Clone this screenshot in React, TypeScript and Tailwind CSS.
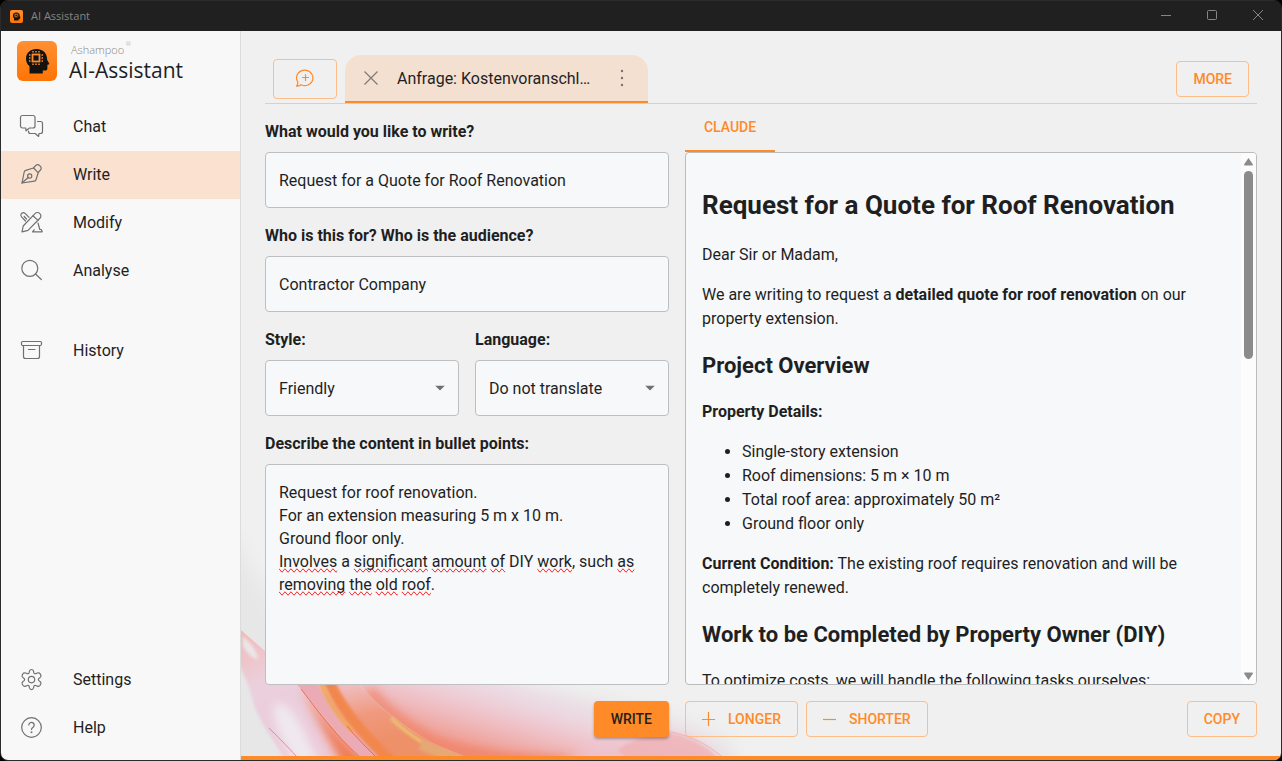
import { useState } from 'react';
import type { ReactNode } from 'react';

interface NavItem {
  id: string;
  label: string;
  icon: ReactNode;
}

interface IconProps {
  children: ReactNode;
}

function NavIcon({ children }: IconProps) {
  return (
    <svg
      viewBox="0 0 28 28"
      className="w-7 h-7 shrink-0"
      fill="none"
      stroke="currentColor"
      strokeWidth="1.2"
      strokeLinecap="round"
      strokeLinejoin="round"
      aria-hidden="true"
    >
      {children}
    </svg>
  );
}

const mainItems: NavItem[] = [
  {
    id: 'chat',
    label: 'Chat',
    icon: (
      <NavIcon>
        <path d="M5.500 2.500h10.500a2 2 0 0 1 2 2v8.500a2 2 0 0 1-2 2h-3.500L9 17.800 8.700 15H5.500a2 2 0 0 1-2-2v-8.500a2 2 0 0 1 2-2z" />
        <path d="M20.500 8.500h3a2 2 0 0 1 2 2v8a2 2 0 0 1-2 2h-1.500l-.4 3-3.400-3h-4.700a2 2 0 0 1-2-2v-.5" />
      </NavIcon>
    ),
  },
  {
    id: 'write',
    label: 'Write',
    icon: (
      <NavIcon>
        <path d="M5 22 7.200 11a2 2 0 0 1 1.500-1.600l7.800-2.400 4.700 4.700-2.200 7a2 2 0 0 1-1.600 1.400z" />
        <path d="m16.500 7 2.300-2.600a2.600 2.600 0 0 1 3.700 0l.9.9a2.600 2.600 0 0 1 0 3.700l-2.200 2.700" />
        <circle cx="12.700" cy="15" r="2.100" />
        <path d="m5 22 6.200-5.500" />
      </NavIcon>
    ),
  },
  {
    id: 'modify',
    label: 'Modify',
    icon: (
      <NavIcon>
        <path d="M5 22.800 6.200 17 18 4.600a3.300 3.300 0 0 1 4.900 0 3.300 3.300 0 0 1 0 4.700L11 21.300z" />
        <path d="m16 6.700 5 4.700" />
        <path d="m8.500 12-4-4.200a2.600 2.600 0 0 1 0-3.400 2.600 2.600 0 0 1 3.600 0L12 8.300" />
        <path d="m7.200 7.500 2.300 2.500" />
        <path d="m21 14 1.800 6.500h1.500l.9 2.300H15.500l1.700-2" />
      </NavIcon>
    ),
  },
  {
    id: 'analyse',
    label: 'Analyse',
    icon: (
      <NavIcon>
        <circle cx="12.800" cy="11.300" r="8" />
        <path d="m18.500 17 5.800 5.500" />
      </NavIcon>
    ),
  },
];

const historyItem: NavItem = {
  id: 'history',
  label: 'History',
  icon: (
    <NavIcon>
      <rect x="4.500" y="4.500" width="20" height="4" rx="1.200" />
      <path d="M6.500 8.500v11a2 2 0 0 0 2 2h12a2 2 0 0 0 2-2v-11M11.500 12.500h6.500" />
    </NavIcon>
  ),
};

const footerItems: NavItem[] = [
  {
    id: 'settings',
    label: 'Settings',
    icon: (
      <NavIcon>
        <path d="M12.500 5.200c.3-1.200.8-1.700 2-1.700s1.700.5 2 1.700l.3 1.500c.2.800 1.200 1.300 2 .9l1.500-.6c1.300-.5 2.200-.2 2.800.8l.7 1.300c.5 1 .2 1.700-.8 2.500l-1.100.9c-.7.600-.7 1.500 0 2.100l1.100.9c1 .8 1.300 1.500.8 2.500l-.7 1.300c-.6 1-1.500 1.300-2.800.8l-1.500-.6c-.8-.4-1.800.1-2 .9l-.3 1.500c-.3 1.200-.8 1.700-2 1.700s-1.700-.5-2-1.700l-.3-1.500c-.2-.8-1.200-1.300-2-.9l-1.500.6c-1.300.5-2.200.2-2.800-.8l-.7-1.300c-.5-1-.2-1.700.8-2.500l1.100-.9c.7-.6.7-1.500 0-2.100L6 11.600c-1-.8-1.300-1.500-.8-2.500l.7-1.300c.6-1 1.500-1.300 2.800-.8l1.500.6c.8.400 1.800-.1 2-.9z" />
        <circle cx="14.500" cy="13.600" r="3.200" />
      </NavIcon>
    ),
  },
  {
    id: 'help',
    label: 'Help',
    icon: (
      <NavIcon>
        <circle cx="14.500" cy="13.500" r="9.800" />
        <path d="M11.800 11a2.700 2.700 0 1 1 4.300 2.200c-1 .7-1.600 1.200-1.600 2.300" />
        <circle cx="14.500" cy="18.300" r=".4" fill="currentColor" />
      </NavIcon>
    ),
  },
];

function AppLogo({ className }: { className: string }) {
  return (
    <svg viewBox="0 0 40 40" className={className} aria-hidden="true">
      <defs>
        <linearGradient id="logo-fill" x1="0" y1="0" x2="0" y2="1">
          <stop offset="0" stopColor="#ff9034" />
          <stop offset="1" stopColor="#ff7404" />
        </linearGradient>
      </defs>
      <rect width="40" height="40" rx="6" fill="url(#logo-fill)" />
      <path
        d="M12.500 32.500v-7.200C10.200 23.500 9 20.700 9 17.500 9 12 13.500 8 19.500 8c6 0 10 3.500 10.500 9l.2 2 1.900 3.200c.4.700.1 1.200-.6 1.300l-1.100.2v3.500c0 1.600-.8 2.300-2.300 2.300h-2.300v3z"
        fill="#121212"
      />
      <g stroke="#ff8a28" fill="none">
        <rect x="15.500" y="13.500" width="7" height="7" strokeWidth="1.800" />
        <path
          d="M16 11.500v-1.500M19 11.500v-1.500M22 11.500v-1.500M16 22.500v1.500M19 22.500v1.500M22 22.500v1.500M13.500 14h-1.500M13.500 17h-1.500M13.500 20h-1.500M24.500 14h1.500M24.500 17h1.500M24.500 20h1.500"
          strokeWidth="1.500"
        />
      </g>
    </svg>
  );
}

function TitleBar() {
  return (
    <header className="flex h-[30px] shrink-0 items-center justify-between bg-[#202020] pl-[9px] text-[#858585]">
      <div className="flex items-center gap-2">
        <AppLogo className="w-[13px] h-[13px]" />
        <span className="font-['Open_Sans',sans-serif] text-[11px]">AI Assistant</span>
      </div>
      <div className="flex">
        <button className="flex h-[30px] w-[46px] items-center justify-center" aria-label="Minimise">
          <svg width="12" height="12" stroke="currentColor" aria-hidden="true">
            <path d="M1 5.500h10" />
          </svg>
        </button>
        <button className="flex h-[30px] w-[46px] items-center justify-center" aria-label="Maximise">
          <svg width="12" height="12" fill="none" stroke="currentColor" aria-hidden="true">
            <rect x="1.500" y=".5" width="9" height="9" rx="1" />
          </svg>
        </button>
        <button className="flex h-[30px] w-[46px] items-center justify-center" aria-label="Close window">
          <svg width="12" height="12" stroke="currentColor" aria-hidden="true">
            <path d="m1 0 10 10M11 0 1 10" />
          </svg>
        </button>
      </div>
    </header>
  );
}

interface NavButtonProps {
  item: NavItem;
  active: boolean;
  onSelect: (id: string) => void;
}

function NavButton({ item, active, onSelect }: NavButtonProps) {
  return (
    <button
      onClick={() => onSelect(item.id)}
      className={`flex h-12 w-full items-center gap-7 px-4 text-left text-base ${
        active ? 'bg-[#fbe1cf]' : 'hover:bg-black/5'
      }`}
    >
      <span className="text-[#707070]">{item.icon}</span>
      <span>{item.label}</span>
    </button>
  );
}

function Sidebar() {
  const [active, setActive] = useState('write');

  return (
    <aside className="flex w-60 shrink-0 flex-col border-r border-[#dcdcdc] bg-[#f8f8f8] pb-2">
      <div className="flex h-[72px] items-start gap-3 px-4 pt-[10px]">
        <AppLogo className="w-10 h-10 shrink-0" />
        <div className="flex flex-col font-['Open_Sans',sans-serif]">
          <span className="pl-[2px] text-[11px] leading-[18px] font-light text-[#888888]">
            Ashampoo<span className="align-top text-[6px] leading-none"> ®</span>
          </span>
          <span className="text-[21px] leading-[22px]">AI-Assistant</span>
        </div>
      </div>
      <nav className="flex grow flex-col">
        {mainItems.map(item => (
          <NavButton key={item.id} item={item} active={active === item.id} onSelect={setActive} />
        ))}
        <div className="mt-8">
          <NavButton item={historyItem} active={active === 'history'} onSelect={setActive} />
        </div>
        <div className="mt-auto">
          {footerItems.map(item => (
            <NavButton key={item.id} item={item} active={active === item.id} onSelect={setActive} />
          ))}
        </div>
      </nav>
    </aside>
  );
}

// Soft ribbons of colour in the lower left corner of the workspace
function Ribbons() {
  return (
    <svg
      viewBox="0 0 560 256"
      className="pointer-events-none absolute bottom-0 left-0 h-[256px] w-[560px]"
      aria-hidden="true"
    >
      <defs>
        <filter id="soft" filterUnits="userSpaceOnUse" x="-60" y="-40" width="700" height="380">
          <feGaussianBlur stdDeviation="10" />
        </filter>
        <filter id="mid" filterUnits="userSpaceOnUse" x="-60" y="-40" width="700" height="380">
          <feGaussianBlur stdDeviation="5" />
        </filter>
        <filter id="edge" filterUnits="userSpaceOnUse" x="-60" y="-40" width="700" height="380">
          <feGaussianBlur stdDeviation="1.500" />
        </filter>
        <clipPath id="left-of-fold">
          <path d="M-20 90v190h160C110 250 84 218 59 188L24 151 0 130z" />
        </clipPath>
        <clipPath id="body">
          <path d="M49 176c28 34 58 68 88 104h180c-60-8-96-24-128-38-30-18-54-36-78-66z" />
        </clipPath>
        <clipPath id="right-of-body">
          <path d="M111 176c24 30 48 48 78 66 32 14 68 30 128 38h243V150H100z" />
        </clipPath>
        <linearGradient id="left-ribbon" gradientUnits="userSpaceOnUse" x1="0" y1="130" x2="60" y2="240">
          <stop offset="0" stopColor="#f1b9b6" />
          <stop offset=".45" stopColor="#ead0dd" />
          <stop offset="1" stopColor="#eccbd9" />
        </linearGradient>
        <linearGradient id="body-fill" gradientUnits="userSpaceOnUse" x1="112" y1="186" x2="124" y2="246">
          <stop offset="0" stopColor="#efbcbc" />
          <stop offset=".5" stopColor="#f0997e" />
          <stop offset="1" stopColor="#ee9068" />
        </linearGradient>
        <linearGradient id="wash" gradientUnits="userSpaceOnUse" x1="240" y1="184" x2="218" y2="262">
          <stop offset="0" stopColor="#ecdce4" />
          <stop offset=".35" stopColor="#efc4cc" />
          <stop offset=".7" stopColor="#f0a49c" />
          <stop offset="1" stopColor="#f08c74" />
        </linearGradient>
      </defs>

      <path d="M-30 10C10 60 40 120 90 190h220l180 50v60H-30z" fill="#e7e7e7" filter="url(#soft)" />

      <g clipPath="url(#left-of-fold)">
        <path d="M-20 110C20 142 44 164 80 186l80 100H62C36 246 18 222 12 202 8 182-2 162-20 140z" fill="url(#left-ribbon)" filter="url(#edge)" />
        <path d="M2 136c8 8 14 14 15 24-8-4-12-8-15-14z" fill="#ebe6e8" filter="url(#edge)" />
        <path d="M34 204c10-4 22 12 30 30l20 40H62C44 246 30 224 34 204z" fill="#efe9ef" filter="url(#mid)" />
        <path d="M60 186c24 34 44 60 80 84h-36C88 240 74 216 60 186z" fill="#ef7348" opacity=".9" filter="url(#mid)" />
        <path d="M28 228c8 8 17 17 28 29" stroke="#e98a8a" strokeWidth="1" fill="none" />
      </g>

      <g clipPath="url(#body)">
        <path d="M40 150h200l120 130H60z" fill="url(#body-fill)" />
        <path d="M52 172c20 30 50 66 86 100" stroke="#ecabb4" strokeWidth="26" fill="none" filter="url(#edge)" />
        <path d="M84 172c12 32 32 56 70 94" stroke="#f2874e" strokeWidth="11" fill="none" filter="url(#edge)" />
        <path d="M78 178c8 22 20 40 34 54" stroke="#f2a63c" strokeWidth="3" fill="none" filter="url(#edge)" />
        <path d="M180 244c16 8 30 12 64 16" stroke="#e6a874" strokeWidth="12" fill="none" filter="url(#edge)" />
      </g>
      <path d="M60 189c20 26 36 48 58 67" stroke="#ee6f50" strokeWidth="1" fill="none" />
      <path d="M106 226c8 10 18 20 28 30" stroke="#ea6a44" strokeWidth="1" fill="none" />

      <g clipPath="url(#right-of-body)">
        <path d="M90 160h120c60 20 90 36 140 46l100 24 60 50H120z" fill="#ecdae4" filter="url(#soft)" />
        <path d="M90 160h70c50 24 90 36 140 54 60 20 110 26 150 66H120z" fill="url(#wash)" filter="url(#soft)" />
        <path d="M128 190c20 24 40 38 66 52 40 14 80 18 150 20" stroke="#f07c5c" strokeWidth="10" opacity=".7" fill="none" filter="url(#mid)" />
      </g>
      <path d="M150 218c8 8 18 16 31 24" stroke="#e9cb72" strokeWidth="3" fill="none" filter="url(#edge)" />

      <path d="M320 262c30-24 50-26 80-30 40-4 70 14 96 50H320z" fill="#eec4d0" opacity=".7" filter="url(#mid)" />
      <path d="M376 250c14-10 30-16 50-18 24 4 44 14 60 36h-90z" fill="#f0acac" opacity=".6" filter="url(#edge)" />
      <path d="M430 232c20 4 36 12 50 24" stroke="#f0b4b8" strokeWidth="1" fill="none" />
    </svg>
  );
}

function TabBar() {
  return (
    <div className="flex h-[49px] shrink-0 items-center border-b border-[#d2d2d2] px-2">
      <button
        className="flex h-10 w-16 items-center justify-center rounded border border-[#fdbd88] text-[#ff8a28]"
        aria-label="New request"
      >
        <svg width="20" height="20" fill="none" stroke="currentColor" strokeWidth="1.2" strokeLinecap="round" strokeLinejoin="round" aria-hidden="true">
          <path d="M2.700 12.800A8.200 7.700 0 1 1 6 15.700c-1.300.9-2.800 1.400-4.500 1.400 1-1.200 1.500-2.700 1.200-4.300z" />
          <path d="M10.500 5.500v6M7.500 8.500h6" />
        </svg>
      </button>
      <div className="ml-2 flex h-12 w-[303px] items-center rounded-t-2xl border-b-2 border-[#ff8a28] bg-[#f4e0d1]">
        <button className="ml-4 flex h-5 w-5 items-center justify-center text-[#807a75]" aria-label="Close tab">
          <svg width="16" height="16" stroke="currentColor" strokeWidth="1.2" aria-hidden="true">
            <path d="m1.500 1.500 13 13M14.500 1.500l-13 13" />
          </svg>
        </button>
        <span className="ml-4 w-[200px] truncate pt-px">Anfrage: Kostenvoranschlag Dachsanierung</span>
        <button className="ml-[15px] flex h-5 w-5 items-center justify-center text-[#77716c]" aria-label="Tab options">
          <svg width="4" height="18" fill="currentColor" aria-hidden="true">
            <circle cx="2" cy="2" r="1.200" />
            <circle cx="2" cy="9" r="1.200" />
            <circle cx="2" cy="16" r="1.200" />
          </svg>
        </button>
      </div>
      <button className="ml-auto h-9 rounded border border-[#fdbd88] px-4 pb-px text-sm font-medium text-[#ff8a28]">
        MORE
      </button>
    </div>
  );
}

interface SelectFieldProps {
  id: string;
  label: string;
  options: string[];
}

function SelectField({ id, label, options }: SelectFieldProps) {
  return (
    <div className="flex min-w-0 flex-1 flex-col gap-2">
      <label htmlFor={id} className="font-bold">{label}</label>
      <div className="relative">
        <select
          id={id}
          className="h-14 w-full appearance-none rounded border border-[#bdbfc1] bg-[#f6f8fa] pt-px pr-8 pl-[13px] outline-none"
        >
          {options.map(option => (
            <option key={option}>{option}</option>
          ))}
        </select>
        <svg
          viewBox="0 0 10 5"
          className="pointer-events-none absolute top-1/2 right-[14px] h-[5px] w-[10px] -translate-y-1/2 fill-[#707070]"
          aria-hidden="true"
        >
          <path d="M0 0h10L5 5z" />
        </svg>
      </div>
    </div>
  );
}

interface TextFieldProps {
  id: string;
  label: string;
  value: string;
  onChange: (value: string) => void;
}

function TextField({ id, label, value, onChange }: TextFieldProps) {
  return (
    <div className="flex flex-col gap-2">
      <label htmlFor={id} className="font-bold">{label}</label>
      <input
        id={id}
        type="text"
        value={value}
        onChange={(e) => onChange(e.target.value)}
        className="h-14 w-full rounded border border-[#bdbfc1] bg-[#f6f8fa] px-[13px] outline-none"
      />
    </div>
  );
}

const initialNotes = `Request for roof renovation.
For an extension measuring 5 m x 10 m.
Ground floor only.
Involves a significant amount of DIY work, such as removing the old roof.`;

const misspelled = ['Involves', 'significant', 'amount', 'of', 'work', 'as', 'removing', 'the', 'old', 'roof'];

// Same text as the textarea below it, only the wavy underlines are visible
function SpellingLayer({ text }: { text: string }) {
  const start = text.indexOf('Involves');
  const plain = start < 0 ? text : text.slice(0, start);
  const checked = start < 0 ? '' : text.slice(start);

  return (
    <div
      className="pointer-events-none absolute inset-0 overflow-hidden px-[14px] py-[17px] leading-[23px] whitespace-pre-wrap text-transparent select-none"
      aria-hidden="true"
    >
      {plain}
      {checked.split(/(\w+)/).map((part, index) =>
        misspelled.includes(part) ? (
          <span key={index} className="[text-decoration-line:spelling-error]">
            {part}
          </span>
        ) : (
          part
        )
      )}
    </div>
  );
}

function RequestForm() {
  const [subject, setSubject] = useState('Request for a Quote for Roof Renovation');
  const [audience, setAudience] = useState('Contractor Company');
  const [notes, setNotes] = useState(initialNotes);

  return (
    <form className="col-span-5 flex min-h-0 flex-col gap-4 pt-4" onSubmit={(e) => e.preventDefault()}>
      <TextField id="subject" label="What would you like to write?" value={subject} onChange={setSubject} />
      <TextField id="audience" label="Who is this for? Who is the audience?" value={audience} onChange={setAudience} />
      <div className="flex gap-4">
        <SelectField id="style" label="Style:" options={['Friendly', 'Formal', 'Neutral']} />
        <SelectField id="language" label="Language:" options={['Do not translate', 'English', 'German']} />
      </div>
      <div className="flex min-h-0 flex-1 flex-col gap-2">
        <label htmlFor="notes" className="font-bold">Describe the content in bullet points:</label>
        <div className="relative min-h-0 flex-1">
          <textarea
            id="notes"
            spellCheck={false}
            value={notes}
            onChange={(e) => setNotes(e.target.value)}
            className="block h-full w-full resize-none rounded border border-[#bdbfc1] bg-[#f6f8fa] px-[13px] py-4 leading-[23px] outline-none"
          />
          <SpellingLayer text={notes} />
        </div>
      </div>
      <button
        type="submit"
        className="h-9 self-end rounded bg-[#ff8a28] px-[17px] pb-px text-sm font-medium shadow-[0_2px_3px_rgba(0,0,0,0.3)]"
      >
        WRITE
      </button>
    </form>
  );
}

function ScrollTrack() {
  return (
    <div className="flex w-[15px] shrink-0 flex-col items-center gap-1 bg-[#fcfcfc] pt-1 pb-[3px]" aria-hidden="true">
      <svg width="9" height="10" fill="#8b8b8b">
        <path d="M4.500 1 9 7.500Q9 8.500 8 8.500H1Q0 8.500 0 7.500z" />
      </svg>
      <div className="h-[188px] w-[9px] rounded-full bg-[#8b8b8b]" />
      <svg width="9" height="10" fill="#8b8b8b" className="mt-auto">
        <path d="M4.500 9 0 2.500Q0 1.500 1 1.500H8Q9 1.500 9 2.500z" />
      </svg>
    </div>
  );
}

function ResultPanel() {
  return (
    <section className="col-span-7 flex min-h-0 flex-col">
      <div className="flex h-12 shrink-0">
        <button className="h-12 min-w-[90px] border-b-2 border-[#ff8a28] px-4 text-sm font-medium text-[#ff8a28]">
          CLAUDE
        </button>
      </div>
      <div className="flex min-h-0 flex-1 overflow-hidden rounded border border-[#b9bbbd] bg-[#f6f8fa]">
        <article className="min-w-0 flex-1 overflow-y-auto px-4 pt-4 [scrollbar-width:none]">
          <h1 className="mt-[17px] mb-[18px] text-[26px] leading-[39px] font-bold">
            Request for a Quote for Roof Renovation
          </h1>
          <p className="my-4">Dear Sir or Madam,</p>
          <p className="my-4">
            We are writing to request a <strong>detailed quote for roof renovation</strong> on our property extension.
          </p>
          <h2 className="mt-[18px] mb-[17px] text-[22px] leading-[34px] font-bold">Project Overview</h2>
          <p className="my-4">
            <strong>Property Details:</strong>
          </p>
          <ul className="my-4 list-disc pl-10">
            <li>Single-story extension</li>
            <li>Roof dimensions: 5 m × 10 m</li>
            <li>Total roof area: approximately 50 m²</li>
            <li>Ground floor only</li>
          </ul>
          <p className="my-4">
            <strong>Current Condition:</strong> The existing roof requires renovation and will be completely renewed.
          </p>
          <h2 className="mt-[18px] mb-[17px] text-[22px] leading-[34px] font-bold">
            Work to be Completed by Property Owner (DIY)
          </h2>
          <p className="my-4">To optimize costs, we will handle the following tasks ourselves:</p>
        </article>
        <ScrollTrack />
      </div>
      <div className="mt-4 flex h-9 shrink-0 gap-2">
        <button className="flex items-center gap-3 rounded border border-[#fdbd88] px-4 pb-px text-sm font-medium text-[#ff8a28]">
          <svg width="14" height="14" stroke="currentColor" strokeWidth="1.2" aria-hidden="true">
            <path d="M6.500 0v14M0 7.500h13" />
          </svg>
          LONGER
        </button>
        <button className="flex items-center gap-3 rounded border border-[#fdbd88] px-4 pb-px text-sm font-medium text-[#ff8a28]">
          <svg width="14" height="14" stroke="currentColor" strokeWidth="1.2" aria-hidden="true">
            <path d="M0 7.500h13" />
          </svg>
          SHORTER
        </button>
        <button className="ml-auto rounded border border-[#fdbd88] px-4 pb-px text-sm font-medium text-[#ff8a28]">
          COPY
        </button>
      </div>
    </section>
  );
}

export default function App() {
  return (
    <div className="h-screen bg-black font-[Roboto,sans-serif] text-base text-[#1f1f1f]">
      <div className="flex h-full flex-col overflow-hidden rounded-lg border border-[#2b2b2b]">
        <TitleBar />
        <div className="flex min-h-0 flex-1">
          <Sidebar />
          <main className="relative flex min-w-0 flex-1 flex-col border-b-4 border-[#ff8a28] bg-[#f0f0f0]">
            <Ribbons />
            <div className="relative flex min-h-0 flex-1 flex-col px-6 pt-6 pb-[19px]">
              <TabBar />
              <div className="grid min-h-0 flex-1 grid-cols-12 grid-rows-[minmax(0,1fr)] gap-4">
                <RequestForm />
                <ResultPanel />
              </div>
            </div>
          </main>
        </div>
      </div>
    </div>
  );
}
